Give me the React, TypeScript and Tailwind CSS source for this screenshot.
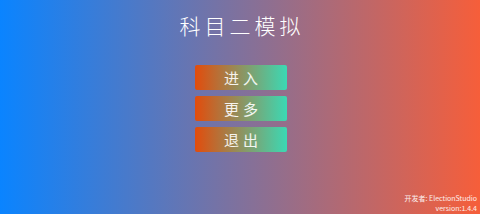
import React from 'react';

const font = { fontFamily: '"Noto Sans CJK SC", "Liberation Sans", sans-serif' };

export default function App() {
    const buttons = ['进入', '更多', '退出'];

    return (
        <div
            className="w-[480px] h-[214px] flex flex-col items-center bg-linear-to-r/srgb from-[#0a84ff] to-[#f65e3a] text-white relative overflow-hidden"
            style={font}
        >
            <h1 className="mt-[11px] text-[21px] leading-[28px] font-light tracking-[4px] pl-[4px]">科目二模拟</h1>

            <div className="mt-[26px] ml-[2px] flex flex-col gap-[6px]">
                {buttons.map((label) => (
                    <button
                        key={label}
                        className="w-[92px] h-[25px] rounded-[2px] bg-linear-to-r/srgb from-[#e24c0c] to-[#3bd9b4] text-[15px] leading-[25px] tracking-[4px] pl-[4px] text-white/90"
                    >
                        {label}
                    </button>
                ))}
            </div>

            {/* footer credit */}
            <div className="absolute right-[3px] bottom-[1px] flex flex-col items-end text-[7px] leading-[10px] text-white/90">
                <span>开发者: ElectionStudio</span>
                <span>version:1.4.4</span>
            </div>
        </div>
    );
}
